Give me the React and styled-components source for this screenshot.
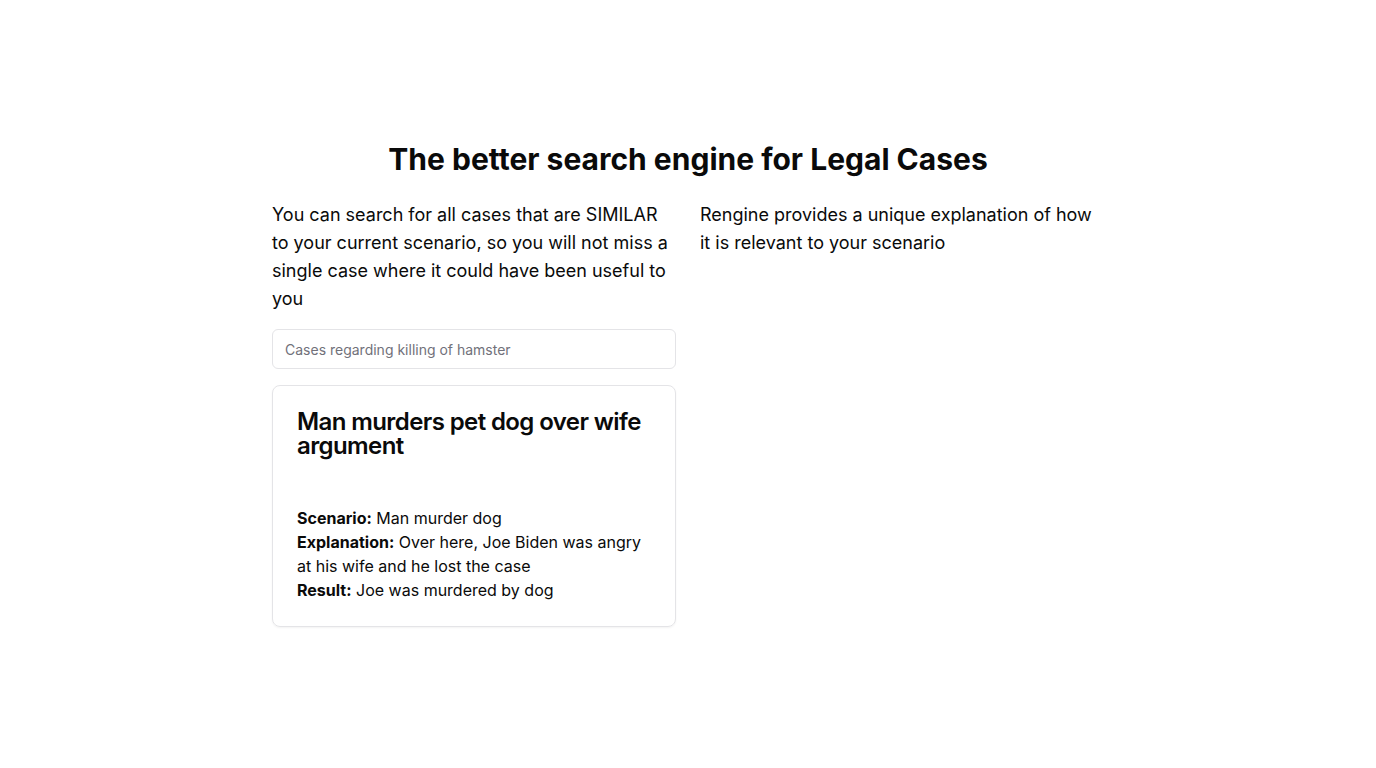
import React from 'react';
import styled, { createGlobalStyle } from 'styled-components';

const GlobalStyle = createGlobalStyle`
  * { box-sizing: border-box; }
  body {
    margin: 0;
    background: #ffffff;
    color: #0a0a0a;
    font-family: Inter, "Noto Sans", sans-serif;
  }
`;

const Page = styled.main`
  min-height: 100vh;
  display: flex;
  flex-direction: column;
  align-items: center;
  padding-top: 141px;
`;

const Title = styled.h1`
  margin: 0 0 24px;
  font-size: 30px;
  line-height: 36px;
  font-weight: 700;
  text-align: center;
`;

const Columns = styled.div`
  display: grid;
  grid-template-columns: 404px 404px;
  gap: 24px;
  align-items: start;
`;

const Column = styled.section`
  display: flex;
  flex-direction: column;
  gap: 16px;
`;

const Lead = styled.p`
  margin: 0;
  font-size: 18px;
  line-height: 28px;
`;

const SearchInput = styled.input`
  height: 40px;
  width: 100%;
  padding: 0 12px;
  border: 1px solid #e4e4e7;
  border-radius: 6px;
  font-family: inherit;
  font-size: 14px;
  color: #0a0a0a;
  background: #fff;
  outline: none;
  &::placeholder { color: #71717a; }
`;

const Card = styled.article`
  border: 1px solid #e4e4e7;
  border-radius: 8px;
  box-shadow: 0 1px 2px rgba(0, 0, 0, 0.05);
  padding: 24px;
`;

const CardTitle = styled.h2`
  margin: 0 0 48px;
  font-size: 24px;
  line-height: 24px;
  font-weight: 600;
  letter-spacing: -0.6px;
`;

const Field = styled.p`
  margin: 0;
  font-size: 16px;
  line-height: 24px;
`;

const Label = styled.strong`
  font-weight: 700;
`;

const result = {
  title: 'Man murders pet dog over wife argument',
  fields: [
    ['Scenario:', 'Man murder dog'],
    ['Explanation:', 'Over here, Joe Biden was angry at his wife and he lost the case'],
    ['Result:', 'Joe was murdered by dog'],
  ],
};

export default function App() {
  return (
    <>
      <GlobalStyle />
      <Page>
        <Title>The better search engine for Legal Cases</Title>
        <Columns>
          <Column>
            <Lead>
              You can search for all cases that are SIMILAR to your current scenario, so you will
              not miss a single case where it could have been useful to you
            </Lead>
            <SearchInput placeholder="Cases regarding killing of hamster" />
            <Card>
              <CardTitle>{result.title}</CardTitle>
              {result.fields.map(([label, value]) => (
                <Field key={label}>
                  <Label>{label}</Label> {value}
                </Field>
              ))}
            </Card>
          </Column>
          <Column>
            <Lead>Rengine provides a unique explanation of how it is relevant to your scenario</Lead>
          </Column>
        </Columns>
      </Page>
    </>
  );
}
